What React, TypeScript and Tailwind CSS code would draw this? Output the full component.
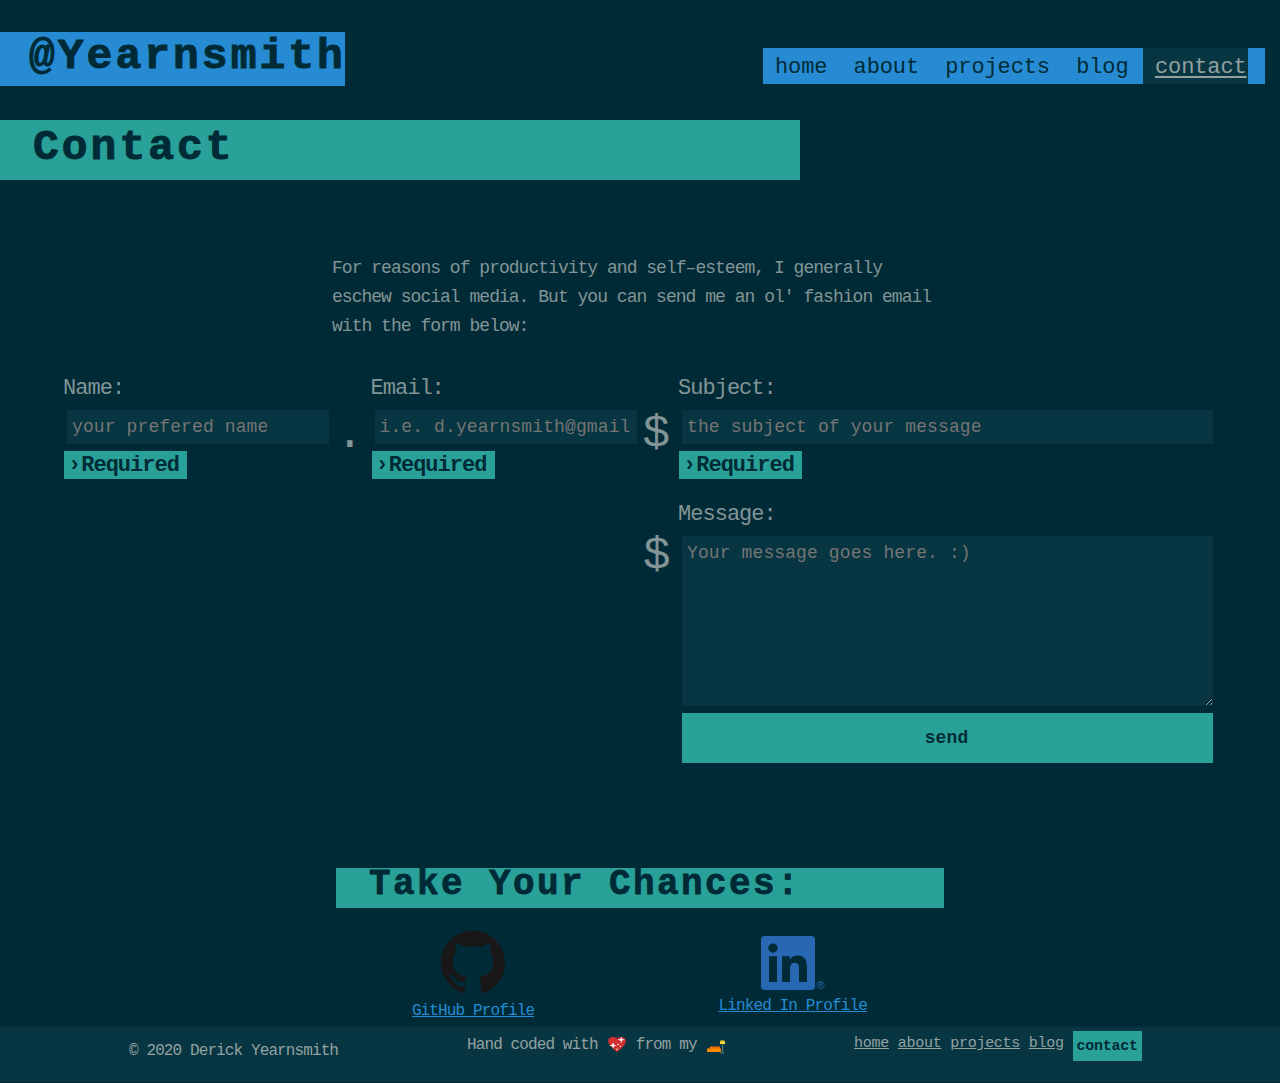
import React from 'react';
import { SiGithub } from 'react-icons/si';

const pages = ['home', 'about', 'projects', 'blog'];

function Required() {
  return (
    <div className="mt-[7px] h-7 w-[123px] whitespace-nowrap bg-[#2aa198] pl-[5px] pt-px text-[22px] font-bold leading-7 tracking-[-0.98px] text-[#002b36]">
      <span className="inline-block w-[12.2px] -indent-px">›</span>Required
    </div>
  );
}

function Label({ children, id }: { children: React.ReactNode; id: string }) {
  return (
    <label htmlFor={id} className="-ml-px block h-10 text-[22px] leading-[38px] tracking-[-0.98px]">
      {children}
    </label>
  );
}

function Symbol({ children }: { children: React.ReactNode }) {
  return <span className="block h-[34px] w-[28px] shrink-0 text-[46px] leading-[51px]">{children}</span>;
}

const control =
  'ml-[3px] block bg-[#073642] px-[5px] text-[18px] tracking-[0.11px] placeholder:text-[#757575] placeholder:opacity-100 outline-none';

function LinkedIn() {
  return (
    <svg viewBox="0 0 24 24" className="h-[54px] w-[54px]" fill="#2867b2">
      <path d="M20.447 20.452h-3.554v-5.569c0-1.328-.027-3.037-1.852-3.037-1.853 0-2.136 1.445-2.136 2.939v5.667H9.351V9h3.414v1.561h.046c.477-.9 1.637-1.85 3.37-1.85 3.601 0 4.267 2.37 4.267 5.455v6.286zM5.337 7.433c-1.144 0-2.063-.926-2.063-2.065 0-1.138.92-2.063 2.063-2.063 1.14 0 2.064.925 2.064 2.063 0 1.139-.925 2.065-2.064 2.065zm1.782 13.019H3.555V9h3.564v11.452zM22.5 0H1.5C.67 0 0 .67 0 1.5v21c0 .83.67 1.5 1.5 1.5h21c.83 0 1.5-.67 1.5-1.5v-21c0-.83-.67-1.5-1.5-1.5z" />
    </svg>
  );
}

function Heart() {
  return (
    <svg viewBox="0 0 16 18" preserveAspectRatio="none" className="ml-[10px] mr-[10px] inline-block h-[17px] w-[18px] -translate-y-px">
      <path d="M8 17.500C6 14.500 .2 10.500 .2 5.400.2 1 5.800-.3 8 3c2.200-3.300 7.800-2 7.800 2.400C15.800 10.500 10 14.500 8 17.500z" fill="#d32f2f" />
      <g fill="#fff">
        <path d="M4.500 6.500l.8 2.700 2.500.8-2.500.8-.8 2.700-.8-2.700-2.500-.8 2.500-.8z" />
        <path d="M11.800.8l.7 2.500 2.500.7-2.500.8-.7 2.500-.8-2.500-2.500-.8 2.500-.7z" />
        <circle cx="9" cy="9" r=".7" />
        <circle cx="11" cy="11" r=".6" />
        <circle cx="8" cy="14" r=".7" />
      </g>
    </svg>
  );
}

function Couch() {
  return (
    <svg viewBox="0 0 17 14" preserveAspectRatio="none" className="ml-[10px] inline-block h-[14px] w-[19px] translate-y-[2px]">
      <path d="M14 4v8.500M12 13.500l2-1.500 1.200 1.500" stroke="#607d78" strokeWidth="1" fill="none" />
      <path d="M12 0.500h3.500l1 3.500h-5z" fill="#fdd835" />
      <path d="M2.500 6.500h9v3h-9z" fill="#ef6c00" />
      <path d="M0 8.500h12.500v3.500H0z" fill="#fb8c00" />
    </svg>
  );
}

export default function App() {
  return (
    <div className="flex h-[1083px] w-[1280px] flex-col overflow-hidden bg-[#002b36] font-['Liberation_Mono',monospace] text-[#839496]">
      <header className="flex h-[120px] items-start justify-between pr-[15px] pt-8">
        <h1 className="h-[54px] w-[345px] whitespace-nowrap bg-[#268bd2] pl-[29px] text-[43px] font-bold leading-[50px] tracking-[3px] text-[#002b36] [-webkit-text-stroke:1px_#002b36]">
          @Yearnsmith
        </h1>
        <nav className="mt-4 flex h-9 w-[502px] bg-[#268bd2] text-[22px] leading-[39px] tracking-[-0.11px] text-[#002b36]">
          {pages.map((p) => (
            <a key={p} className="pl-3 pr-[14.2px]">{p}</a>
          ))}
          <a className="ml-auto mr-[17px] w-[105px] bg-[#073642] pl-3 text-[#93a1a1] underline decoration-2 underline-offset-[3px]">contact</a>
        </nav>
      </header>

      <h2 className="h-[60px] w-[800px] shrink-0 bg-[#2aa198] pl-[33px] text-[43px] font-bold leading-[55px] tracking-[3px] text-[#002b36] [-webkit-text-stroke:1px_#002b36]">
        Contact
      </h2>

      <p className="ml-[332px] mt-[74px] w-[616px] text-[18px] leading-[29px] tracking-[-0.98px]">
        For reasons of productivity and self–esteem, I generally
        <br />
        eschew social media. But you can send me an ol' fashion email
        <br />
        with the form below:
      </p>

      <form className="ml-16 mt-[29px] grid h-[498px] shrink-0 grid-cols-[307.5px_307.5px_534px] grid-rows-[126px_1fr]">
        <div>
          <Label id="name">Name:</Label>
          <div className="flex">
            <input id="name" className={`${control} h-[34px] w-[262px]`} placeholder="your prefered name" />
            <span className="ml-[7px]"><Symbol>.</Symbol></span>
          </div>
          <Required />
        </div>
        <div>
          <Label id="email">Email:</Label>
          <div className="flex">
            <input id="email" className={`${control} h-[34px] w-[262px]`} placeholder="i.e. d.yearnsmith@gmail.com" />
            <span className="ml-[6px]"><Symbol>$</Symbol></span>
          </div>
          <Required />
        </div>
        <div>
          <Label id="subject">Subject:</Label>
          <input id="subject" className={`${control} h-[34px] w-[531px]`} placeholder="the subject of your message" />
          <Required />
        </div>
        <div className="col-start-2 flex justify-end pr-[8px] pt-[36px]">
          <Symbol>$</Symbol>
        </div>
        <div>
          <Label id="message">Message:</Label>
          <textarea id="message" className={`${control} h-[170px] w-[531px] resize py-[5px] leading-6`} placeholder="Your message goes here. :)" />
          <button type="button" className="ml-[3px] mt-[7px] block h-[50px] w-[531px] bg-[#2aa198] pr-[2px] text-[18px] font-bold tracking-[0.11px] text-[#002b36]">
            send
          </button>
        </div>
      </form>

      <h3 className="ml-[336px] h-10 w-[608px] shrink-0 bg-[#2aa198] pl-[33px] text-[36px] font-bold leading-[34px] tracking-[2.4px] text-[#002b36] [-webkit-text-stroke:0.8px_#002b36]">
        Take Your Chances:
      </h3>

      <div className="ml-[336px] flex h-[119px] shrink-0 text-[16px] leading-5 tracking-[-0.87px] text-[#268bd2]">
        <a className="flex w-[274px] flex-col items-center pt-[22px]">
          <SiGithub size={64} color="#191717" />
          <span className="mt-[7px] underline">GitHub Profile</span>
        </a>
        <a className="ml-[108.5px] flex flex-col pt-[28px]">
          <div className="ml-[42px] flex items-end">
            <LinkedIn />
            <span className="ml-[2px] font-['Liberation_Sans'] text-[11px] leading-[9px] tracking-normal text-[#2867b2]">®</span>
          </div>
          <span className="mt-[6px] underline">Linked In Profile</span>
        </a>
      </div>

      <footer className="flex h-[55px] shrink-0 items-start bg-[#073642] text-[16px] leading-5 tracking-[-0.89px] text-[#93a1a1]">
        <p className="ml-[129px] mt-[14px] w-[338px]">© 2020 Derick Yearnsmith</p>
        <p className="mt-[8px] flex h-5 w-[387px] items-center whitespace-nowrap">
          <span>Hand coded with</span>
          <Heart />
          <span>from my</span>
          <Couch />
        </p>
        <nav className="flex text-[15px] tracking-[-0.27px]">
          {pages.map((p) => (
            <a key={p} className="mr-[8.8px] mt-[7px] underline">{p}</a>
          ))}
          <a className="mt-1 h-[30px] w-[69px] bg-[#2aa198] pl-1 font-bold leading-[32px] text-[#002b36]">contact</a>
        </nav>
      </footer>
    </div>
  );
}
